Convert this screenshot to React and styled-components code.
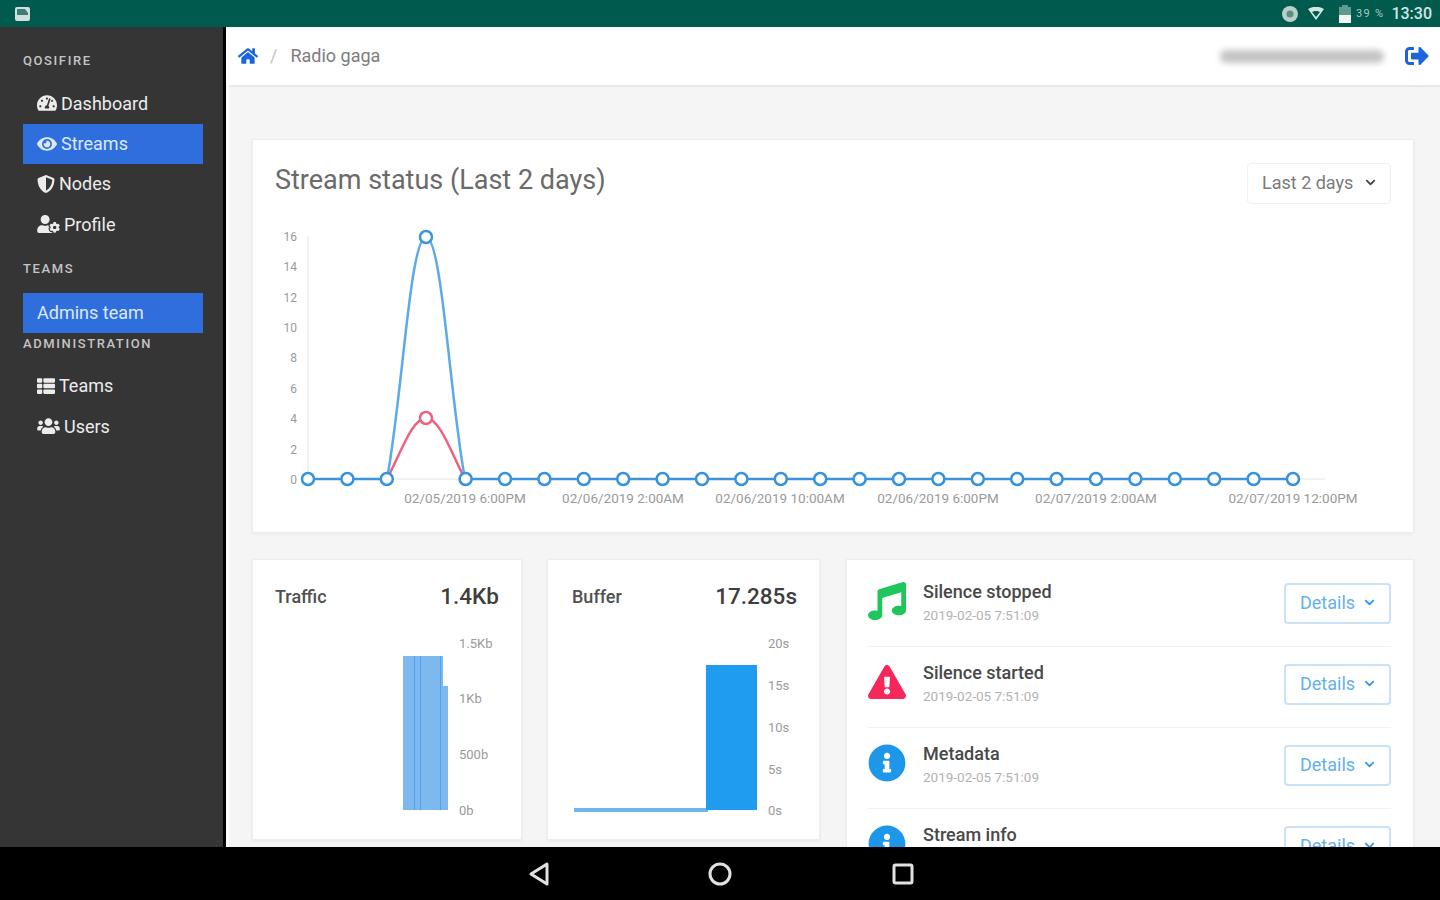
import React from 'react'
import styled, { createGlobalStyle } from 'styled-components'
import {
  FaChevronDown,
  FaExclamationTriangle,
  FaEye,
  FaHome,
  FaInfoCircle,
  FaMusic,
  FaShieldAlt,
  FaSignOutAlt,
  FaTachometerAlt,
  FaThList,
  FaUserCog,
  FaUsers,
} from 'react-icons/fa'

const GlobalStyle = createGlobalStyle`
  html, body { margin: 0; padding: 0; background: #000; }
  body { font-family: Roboto, "Liberation Sans", sans-serif; }
  * { box-sizing: border-box; }
`

const Screen = styled.div`
  width: 1440px;
  height: 900px;
  display: flex;
  flex-direction: column;
  overflow: hidden;
`
const StatusBar = styled.div`
  height: 27px;
  flex: none;
  background: #005a4e;
  color: #d5e5e2;
  display: flex;
  align-items: center;
  padding: 0 8px 0 15px;
`
const StatusRight = styled.div`
  margin-left: auto;
  display: flex;
  align-items: center;
`
const StatusIcon = styled.svg`
  display: block;
  margin-left: ${p => p.$gap || 0}px;
`
const BatteryText = styled.span`
  font-size: 11px;
  letter-spacing: 1.3px;
  margin: 0 7px 0 4px;
  color: #a9c9c4;
`
const Clock = styled.span`
  font-size: 16px;
  font-weight: 500;
`
const Body = styled.div`
  flex: 1;
  min-height: 0;
  display: flex;
`
const Sidebar = styled.aside`
  width: 226px;
  flex: none;
  background: #353535;
  border-right: 3px solid #000;
  padding: 21px 0 0 23px;
`
const NavTitle = styled.div`
  height: ${p => p.$height || 24}px;
  margin: ${p => p.$top || 0}px 0 ${p => p.$bottom || 0}px;
  display: flex;
  align-items: center;
  font-size: 13px;
  font-weight: 500;
  letter-spacing: 1.6px;
  color: #c4c4c4;
`
const NavItem = styled.div`
  width: 180px;
  height: ${p => (p.$active ? 40 : 40.5)}px;
  display: flex;
  align-items: center;
  gap: 4px;
  padding-left: 14px;
  font-size: 18px;
  color: ${p => (p.$active ? '#dce8fb' : '#ececec')};
  background: ${p => (p.$active ? '#2f6fdd' : 'transparent')};
  svg { width: ${p => p.$icon}px; height: 18px; flex: none; }
`
const Main = styled.main`
  flex: 1;
  min-width: 0;
  background: #f5f5f5;
  border-left: 3px solid #fff;
`
const Header = styled.header`
  height: 60px;
  background: #fff;
  border-bottom: 2px solid #e9e9e9;
  display: flex;
  align-items: center;
  padding: 0 11px 0 9px;
  color: #1c64dc;
`
const Crumb = styled.span`
  font-size: 18px;
  color: #7d7d7d;
  margin: 0 0 2px ${p => p.$gap}px;
`
const Separator = styled(Crumb)`
  color: #c4c4c4;
`
const BlurredName = styled.div`
  margin-left: auto;
  margin-right: 21px;
  width: 164px;
  height: 13px;
  border-radius: 6px;
  background: #c4c4c4;
  filter: blur(3px);
`
const Content = styled.div`
  padding: 52px 26px 0 23px;
`
const Card = styled.section`
  background: #fff;
  border: 1px solid #ededed;
  box-shadow: 0 1px 3px rgba(0, 0, 0, 0.06);
`
const ChartCard = styled(Card)`
  height: 394px;
  padding: 22px 22px 0;
`
const ChartHead = styled.div`
  display: flex;
  justify-content: space-between;
  align-items: flex-start;
  height: 63px;
`
const ChartTitle = styled.h2`
  margin: 0;
  font-size: 27px;
  line-height: 36px;
  font-weight: 400;
  color: #6a6a6a;
`
const RangeSelect = styled.div`
  width: 144px;
  height: 41px;
  margin-top: 1px;
  border: 1px solid #f0f0f0;
  border-radius: 4px;
  display: flex;
  align-items: center;
  justify-content: space-between;
  padding: 0 14px 3px;
  font-size: 18px;
  color: #7b7b7b;
  svg { width: 11px; height: 11px; color: #444; }
`
const Row = styled.div`
  display: flex;
  align-items: flex-start;
  margin-top: 26px;
`
const StatCard = styled(Card)`
  width: ${p => p.$width}px;
  margin-right: ${p => p.$gap}px;
  height: 281px;
  flex: none;
  padding: 22px 22px 0;
`
const StatHead = styled.div`
  display: flex;
  justify-content: space-between;
  align-items: center;
  height: 28px;
  margin-bottom: 20px;
`
const StatLabel = styled.span`
  font-size: 18px;
  font-weight: 500;
  color: #505050;
  margin-left: ${p => p.$indent || 0}px;
`
const StatValue = styled.span`
  font-size: 22.5px;
  font-weight: 500;
  color: #3e3e3e;
`
const EventCard = styled(Card)`
  flex: 1;
  padding: 6px 22px 0 21px;
`
const EventRow = styled.div`
  display: flex;
  align-items: flex-start;
  padding: 17px 0 22px;
  border-bottom: 1px solid #f1f1f1;
  &:last-child { border-bottom: 0; }
`
const EventIcon = styled.div`
  width: 38px;
  height: 38px;
  margin: -1px 17px 0 0;
  flex: none;
  color: ${p => p.$color};
  svg { width: 100%; height: 100%; display: block; }
`
const EventText = styled.div`
  flex: 1;
  height: 41px;
  margin-top: -1px;
`
const EventName = styled.div`
  font-size: 18px;
  line-height: 20px;
  font-weight: 500;
  color: #484848;
`
const EventDate = styled.div`
  font-size: 13.5px;
  line-height: 16px;
  margin-top: 5px;
  color: #b2b2b2;
`
const DetailsButton = styled.div`
  width: 107px;
  height: 41px;
  border: 2px solid #c9e2f8;
  border-radius: 4px;
  display: flex;
  align-items: center;
  justify-content: space-between;
  padding: 0 14px 2px;
  font-size: 18px;
  color: #64b0ee;
  svg { width: 11px; height: 11px; color: #2f97ec; }
`
const NavBar = styled.div`
  height: 53px;
  flex: none;
  background: #000;
  display: flex;
  justify-content: center;
  align-items: center;
  gap: 158px;
`
const ChartSvg = styled.svg`
  display: block;
  font-family: Roboto, "Liberation Sans", sans-serif;
  text { fill: #9a9a9a; }
`

const POINTS = Array.from({ length: 26 }, (_, i) => 308 + i * 39.4)
const Y_TICKS = [0, 2, 4, 6, 8, 10, 12, 14, 16]
const X_TICKS = [
  [465, '02/05/2019 6:00PM'],
  [623, '02/06/2019 2:00AM'],
  [780, '02/06/2019 10:00AM'],
  [938, '02/06/2019 6:00PM'],
  [1096, '02/07/2019 2:00AM'],
  [1293, '02/07/2019 12:00PM'],
]

const StreamChart = () => (
  <ChartSvg width="1116" height="300" viewBox="275 225 1116 300">
    <path d="M308 236V479H1325" fill="none" stroke="#eeeeee" strokeWidth="1.5" />
    {Y_TICKS.map(t => (
      <text key={t} x="297" y={484 - t * 15.19} textAnchor="end" fontSize="12">{t}</text>
    ))}
    {X_TICKS.map(([x, label]) => (
      <text key={label} x={x} y="503" textAnchor="middle" fontSize="13.5">{label}</text>
    ))}
    <path d="M387 479C400 455 412 418 426 418C440 418 452 455 465 479" fill="none" stroke="#f0607f" strokeWidth="2.5" />
    <path d="M387 479C402 400 410 237 426 237C442 237 450 400 465 479" fill="none" stroke="#5caaea" strokeWidth="2.5" />
    <path d="M308 479H387M465 479H1293" stroke="#3d94dc" strokeWidth="2.5" />
    <circle cx="426" cy="418" r="6" fill="#fff" stroke="#f0607f" strokeWidth="2.5" />
    <circle cx="426" cy="237" r="6" fill="#fff" stroke="#3d94dc" strokeWidth="2.5" />
    {POINTS.filter((_, i) => i !== 3).map(x => (
      <circle key={x} cx={x} cy="479" r="6" fill="#fff" stroke="#3592de" strokeWidth="2.5" />
    ))}
  </ChartSvg>
)

const TrafficChart = () => (
  <ChartSvg width="224" height="195" viewBox="275 630 224 195">
    <rect x="403" y="656" width="40" height="154" fill="#7db9ef" />
    <rect x="443" y="686" width="5" height="124" fill="#7db9ef" />
    {[414, 420, 440].map(x => (
      <rect key={x} x={x} y="656" width="1" height="154" fill="#4ba3ed" />
    ))}
    {[['1.5Kb', 648], ['1Kb', 703], ['500b', 759], ['0b', 815]].map(([t, y]) => (
      <text key={t} x="459" y={y} fontSize="13">{t}</text>
    ))}
  </ChartSvg>
)

const BufferChart = () => (
  <ChartSvg width="227" height="195" viewBox="570 630 227 195">
    <rect x="574" y="808" width="134" height="4" fill="#6cb6f0" />
    <rect x="706" y="665" width="51" height="145" fill="#1f9bef" />
    {[['20s', 648], ['15s', 690], ['10s', 732], ['5s', 774], ['0s', 815]].map(([t, y]) => (
      <text key={t} x="768" y={y} fontSize="13">{t}</text>
    ))}
  </ChartSvg>
)

const EVENTS = [
  { name: 'Silence stopped', icon: <FaMusic />, color: '#1fc65c' },
  { name: 'Silence started', icon: <FaExclamationTriangle />, color: '#f5275b' },
  { name: 'Metadata', icon: <FaInfoCircle />, color: '#1e96ea' },
  { name: 'Stream info', icon: <FaInfoCircle />, color: '#1e96ea' },
]

export default function App() {
  return (
    <Screen>
      <GlobalStyle />
      <StatusBar>
        <StatusIcon width="15" height="14" viewBox="0 0 15 14">
          <rect width="15" height="14" rx="2" fill="#cfe0dd" />
          <path d="M2 2h8l3 4v2H2z" fill="#3d7d73" />
        </StatusIcon>
        <StatusRight>
          <StatusIcon width="18" height="18" viewBox="0 0 18 18">
            <circle cx="9" cy="9" r="8" fill="#b9cfcb" />
            <circle cx="9" cy="9" r="3.5" fill="#5d8d85" />
          </StatusIcon>
          <StatusIcon $gap={8} width="18" height="14" viewBox="0 0 18 14">
            <path d="M1 2C6-1 12-1 17 2L9 13z" fill="#d5e5e2" />
            <path d="M5 5C7 3.500 11 3.500 13 5L9 10z" fill="#005a4e" />
          </StatusIcon>
          <StatusIcon $gap={13} width="14" height="20" viewBox="0 0 14 20">
            <path d="M4 1h6v2h3v16H1V3h3z" fill="#5f9a90" />
            <rect x="1" y="11" width="12" height="8" fill="#eef5f3" />
          </StatusIcon>
          <BatteryText>39 %</BatteryText>
          <Clock>13:30</Clock>
        </StatusRight>
      </StatusBar>
      <Body>
        <Sidebar>
          <NavTitle $bottom={11}>QOSIFIRE</NavTitle>
          <NavItem $icon={20}><FaTachometerAlt />Dashboard</NavItem>
          <NavItem $icon={20} $active><FaEye />Streams</NavItem>
          <NavItem $icon={18}><FaShieldAlt />Nodes</NavItem>
          <NavItem $icon={23}><FaUserCog />Profile</NavItem>
          <NavTitle $top={12} $bottom={12}>TEAMS</NavTitle>
          <NavItem $active>Admins team</NavItem>
          <NavTitle $height={22} $bottom={11}>ADMINISTRATION</NavTitle>
          <NavItem $icon={18}><FaThList />Teams</NavItem>
          <NavItem $icon={23}><FaUsers />Users</NavItem>
        </Sidebar>
        <Main>
          <Header>
            <FaHome size={20} />
            <Separator $gap={12}>/</Separator>
            <Crumb $gap={13}>Radio gaga</Crumb>
            <BlurredName />
            <FaSignOutAlt size={24} />
          </Header>
          <Content>
            <ChartCard>
              <ChartHead>
                <ChartTitle>Stream status (Last 2 days)</ChartTitle>
                <RangeSelect>Last 2 days<FaChevronDown /></RangeSelect>
              </ChartHead>
              <StreamChart />
            </ChartCard>
            <Row>
              <StatCard $width={270} $gap={25}>
                <StatHead><StatLabel>Traffic</StatLabel><StatValue>1.4Kb</StatValue></StatHead>
                <TrafficChart />
              </StatCard>
              <StatCard $width={273} $gap={26}>
                <StatHead><StatLabel $indent={2}>Buffer</StatLabel><StatValue>17.285s</StatValue></StatHead>
                <BufferChart />
              </StatCard>
              <EventCard>
                {EVENTS.map(e => (
                  <EventRow key={e.name}>
                    <EventIcon $color={e.color}>{e.icon}</EventIcon>
                    <EventText>
                      <EventName>{e.name}</EventName>
                      <EventDate>2019-02-05 7:51:09</EventDate>
                    </EventText>
                    <DetailsButton>Details<FaChevronDown /></DetailsButton>
                  </EventRow>
                ))}
              </EventCard>
            </Row>
          </Content>
        </Main>
      </Body>
      <NavBar>
        <svg width="24" height="26" viewBox="0 0 24 26">
          <path d="M22 3V23L6 13z" fill="none" stroke="#e2e2e2" strokeWidth="3" strokeLinejoin="round" />
        </svg>
        <svg width="26" height="26" viewBox="0 0 26 26">
          <circle cx="13" cy="13" r="10" fill="none" stroke="#e2e2e2" strokeWidth="3" />
        </svg>
        <svg width="24" height="24" viewBox="0 0 24 24">
          <rect x="3" y="3" width="18" height="18" rx="1.500" fill="none" stroke="#e2e2e2" strokeWidth="3" />
        </svg>
      </NavBar>
    </Screen>
  )
}
